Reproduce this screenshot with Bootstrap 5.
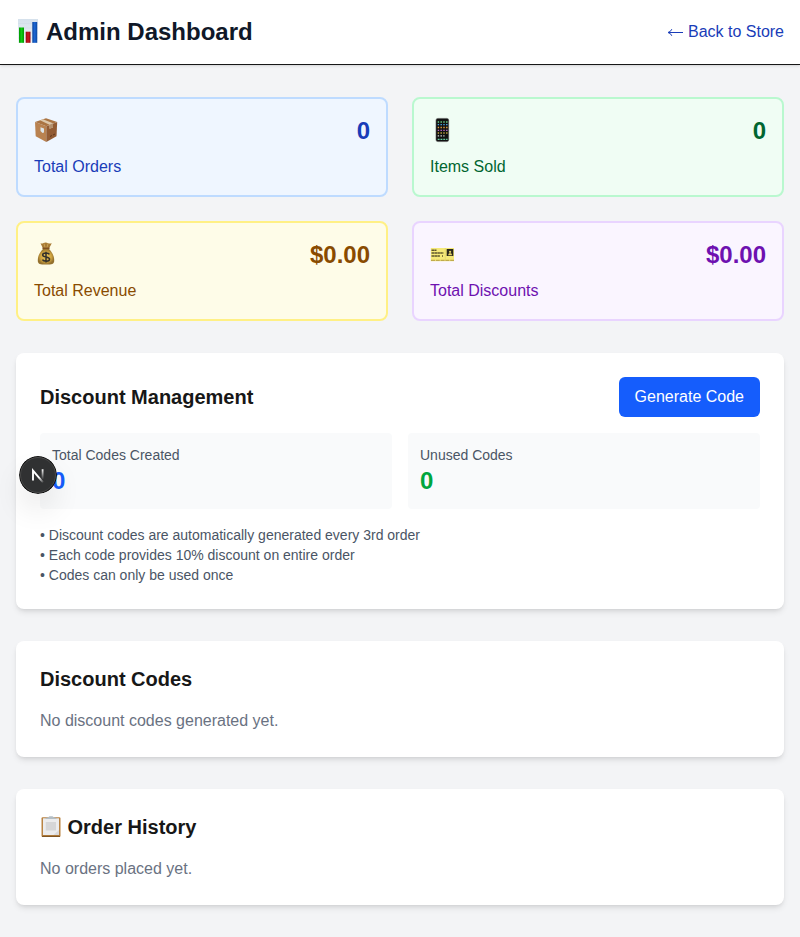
<!DOCTYPE html>
<html lang="en">
<head>
<meta charset="utf-8">
<meta name="viewport" content="width=device-width, initial-scale=1">
<title>Admin Dashboard</title>
<link href="https://cdn.jsdelivr.net/npm/bootstrap@5.3.0/dist/css/bootstrap.min.css" rel="stylesheet">
<style>
  body { background: #f3f4f6; color: #171717; font-family: "Liberation Sans", Arial, sans-serif; line-height: 24px; min-height: 937px; }
  .topbar { height: 65px; border-bottom: 1px solid #171717; box-shadow: 0 1px 3px rgba(0,0,0,.1), 0 1px 2px -1px rgba(0,0,0,.1); }
  .topbar h1 { font-size: 24px; line-height: 32px; color: #101828; }
  .topbar a { color: #193cb8; }
  .arrow { width: 17px; height: 16px; }
  .page { padding: 32px 16px; }
  .emoji { margin-bottom: 2px; }
  .title-emoji { margin-right: 5.500px; }
  .stat { border: 2px solid; border-radius: 8px; height: 100px; }
  .stat-value { font-size: 24px; line-height: 32px; }
  .stat-blue { background: #eff6ff; border-color: #bedbff; color: #193cb8; }
  .stat-green { background: #f0fdf4; border-color: #b9f8cf; color: #016630; }
  .stat-yellow { background: #fefce8; border-color: #fff085; color: #894b00; }
  .stat-purple { background: #faf5ff; border-color: #e9d4ff; color: #6e11b0; }
  .panel { border-radius: 8px; box-shadow: 0 4px 6px -1px rgba(0,0,0,.1), 0 2px 4px -2px rgba(0,0,0,.1); margin-top: 32px; }
  .panel h2 { font-size: 20px; line-height: 28px; }
  .btn-generate { background: #155dfc; color: #fff; border: 0; border-radius: 6px; padding: 8px 16px; line-height: 24px; height: 40px; }
  .tile { background: #f9fafb; border-radius: 4px; padding: 12px; height: 76px; }
  .tile-label, .notes { font-size: 14px; line-height: 20px; color: #4a5565; }
  .c-blue { color: #155dfc; }
  .c-green { color: #00a63e; }
  .empty { color: #6a7282; }
  .dev-badge { position: fixed; left: 19px; top: 456px; width: 38px; height: 38px; border-radius: 50%; box-shadow: 0 16px 32px -8px rgba(0,0,0,.24); z-index: 10; }
</style>
</head>
<body>
<header class="topbar bg-white d-flex justify-content-between align-items-center px-3">
  <h1 class="fw-bold mb-0 d-flex align-items-center">
    <svg class="emoji me-2" width="22" height="26" viewBox="0 0 22 26" aria-hidden="true">
      <defs>
        <linearGradient id="gBg" x2="0" y2="1"><stop stop-color="#d5e1ec"/><stop offset="1" stop-color="#eef2f6"/></linearGradient>
        <linearGradient id="gG"><stop stop-color="#009a00"/><stop offset=".5" stop-color="#10c914"/><stop offset="1" stop-color="#009a00"/></linearGradient>
        <linearGradient id="gR"><stop stop-color="#930710"/><stop offset=".5" stop-color="#cf1721"/><stop offset="1" stop-color="#930710"/></linearGradient>
        <linearGradient id="gB"><stop stop-color="#0b469f"/><stop offset=".5" stop-color="#1d67d4"/><stop offset="1" stop-color="#0b469f"/></linearGradient>
      </defs>
      <rect x="2" y="1" width="20" height="24" fill="url(#gBg)"/>
      <path d="M2 5.500H22M2 10H22M2 15H22M2 20H22" stroke="#ccd7e2" stroke-width=".4"/>
      <rect x="3" y="9.500" width="5" height="15.300" fill="url(#gG)"/>
      <rect x="9.700" y="13.700" width="4.800" height="11.100" fill="url(#gR)"/>
      <rect x="16.300" y="4" width="4.900" height="20.800" fill="url(#gB)"/>
    </svg>Admin Dashboard
  </h1>
  <a href="#" class="text-decoration-none d-flex align-items-center"><svg class="arrow me-1" viewBox="0 0 17 16" fill="none" stroke="currentColor" aria-hidden="true"><path d="M16 8.500H1.500M4.800 5.200 Q3.800 7.800 1 8.500 Q3.800 9.200 4.800 11.800" stroke-width="1"/></svg>Back to Store</a>
</header>

<main class="page">
  <div class="row row-cols-2 g-4">
    <div class="col"><div class="stat stat-blue p-3">
      <div class="d-flex justify-content-between align-items-center mb-2">
        <svg class="emoji" width="24" height="28" viewBox="0 0 24 28" aria-hidden="true">
          <path d="M1 6 12.300 10.200V26L1.700 20.300z" fill="#b98250"/>
          <path d="M12.300 10.200 23.200 6 22.500 20.300 12.300 26z" fill="#935c34"/>
          <path d="M1 6 12 2.200 23.200 6 12.300 10.200z" fill="#aa7443"/>
          <path d="M6 4.300 9 3.200 19 7.300V11.500l-3.500 1.300V8.700z" fill="#dcc7ab"/>
          <path d="M15.500 8.700 19 7.300V11.500l-3.500 1.300z" fill="#b3906e"/>
          <path d="M6.500 11.200 10 12.500V16.500L8.500 17 6.500 15z" fill="#dce4e8"/>
          <path d="M16 20.500 18 19.500M19 19 21 18" stroke="#5f371d"/>
        </svg>
        <div class="stat-value fw-bold">0</div>
      </div>
      <div>Total Orders</div>
    </div></div>
    <div class="col"><div class="stat stat-green p-3">
      <div class="d-flex justify-content-between align-items-center mb-2">
        <svg class="emoji" width="24" height="28" viewBox="0 0 24 28" aria-hidden="true">
          <rect x="6" y="2.400" width="12.700" height="23.200" rx="1.800" fill="#111" stroke="#555" stroke-width=".6"/>
          <g stroke-width="1.300" fill="none" stroke-dasharray="1.400 1.400">
            <path d="M7.700 6H17.500" stroke="#6bd38a"/>
            <path d="M7.700 8.700H17.500" stroke="#48a5e8"/>
            <path d="M7.700 11.500H17.500" stroke="#e6a13f"/>
            <path d="M7.700 14.300H17.500" stroke="#b965c7"/>
            <path d="M7.700 17H17.500" stroke="#c2a43e"/>
            <path d="M7.700 19.800H14.500" stroke="#d9dade"/>
            <path d="M7.700 23.300H17.500" stroke="#69cfa4" stroke-dasharray="1.900 .9"/>
          </g>
        </svg>
        <div class="stat-value fw-bold">0</div>
      </div>
      <div>Items Sold</div>
    </div></div>
    <div class="col"><div class="stat stat-yellow p-3">
      <div class="d-flex justify-content-between align-items-center mb-2">
        <svg class="emoji" width="24" height="28" viewBox="0 0 24 28" aria-hidden="true">
          <defs><radialGradient id="gBag"><stop stop-color="#e8c75e"/><stop offset=".65" stop-color="#d0a43f"/><stop offset="1" stop-color="#94712e"/></radialGradient></defs>
          <path d="M9 9C6 12 3.600 16 3.800 21c.2 3 2 3.500 8.200 3.500s8-.5 8.200-3.500C20.400 16 18 12 15 9z" fill="url(#gBag)"/>
          <path d="M6.500 3.200Q8 4 9.500 3 12 2 14 3.200q2 .8 3.800 0L15 8.500H9z" fill="#a87b34"/>
          <path d="M9 8.300H15" stroke="#80501f" stroke-width="1.400" stroke-linecap="round"/>
          <path d="M10 3.500 11 7.500M14 3.500 13 7.500" stroke="#d3ad60" stroke-width=".7"/>
          <path d="M15.400 14.300C14.500 12.500 8.700 12.300 8.700 14.900c0 2.600 6.900 1.400 6.900 4.100 0 2.900-6 2.700-7.200.7M12 11.800V22.500" fill="none" stroke="#33302a" stroke-width="1.500"/>
        </svg>
        <div class="stat-value fw-bold">$0.00</div>
      </div>
      <div>Total Revenue</div>
    </div></div>
    <div class="col"><div class="stat stat-purple p-3">
      <div class="d-flex justify-content-between align-items-center mb-2">
        <svg width="24" height="28" viewBox="0 0 24 28" aria-hidden="true">
          <rect x=".8" y="7" width="23.200" height="13.200" fill="#f4e878"/>
          <path d="M1 19.300H24" stroke="#b39c42" stroke-width="1" stroke-dasharray="4 .8"/>
          <path d="M1.500 9.200H6.500M1.500 12H13.500M1.500 15H10M12 15H13" stroke="#5d552c" stroke-width="1.500" stroke-dasharray="2.600 .3"/>
          <path d="M15.300 7.500V20" stroke="#cdbd60" stroke-width=".6" stroke-dasharray="1 1"/>
          <rect x="16.700" y="8" width="6.600" height="7" fill="#28261c"/>
          <path d="M18 14.300 19 12.300h2.200l1.100 2z" fill="#e4d369"/><circle cx="20.100" cy="10.800" r="1.100" fill="#e4d369"/>
        </svg>
        <div class="stat-value fw-bold">$0.00</div>
      </div>
      <div>Total Discounts</div>
    </div></div>
  </div>

  <section class="panel bg-white p-4">
    <div class="d-flex justify-content-between align-items-center mb-3">
      <h2 class="fw-bold mb-0">Discount Management</h2>
      <button type="button" class="btn btn-generate">Generate Code</button>
    </div>
    <div class="row row-cols-2 gx-3 mb-3">
      <div class="col"><div class="tile"><div class="tile-label">Total Codes Created</div><div class="stat-value fw-bold c-blue">0</div></div></div>
      <div class="col"><div class="tile"><div class="tile-label">Unused Codes</div><div class="stat-value fw-bold c-green">0</div></div></div>
    </div>
    <div class="notes">
      <div>• Discount codes are automatically generated every 3rd order</div>
      <div>• Each code provides 10% discount on entire order</div>
      <div>• Codes can only be used once</div>
    </div>
  </section>

  <section class="panel bg-white p-4">
    <h2 class="fw-bold mb-3">Discount Codes</h2>
    <div class="empty">No discount codes generated yet.</div>
  </section>

  <section class="panel bg-white p-4">
    <h2 class="fw-bold mb-3 d-flex align-items-center">
      <svg class="emoji title-emoji" width="22" height="24" viewBox="0 0 22 24" aria-hidden="true">
        <rect x="1.500" y="3.200" width="19" height="19.800" rx="1.200" fill="#b98343"/>
        <path d="M2 22.400H20" stroke="#815522" stroke-width="1.200"/>
        <path d="M3 4.300H19V21H3z" fill="#ececed"/>
        <rect x="5.800" y="8" width="10.200" height="8.500" fill="#d6d6d7"/>
        <path d="M5.500 5V3.900Q9 3.700 9.500 2.300h3Q13 3.700 16.500 3.900V5z" fill="#b4bec5"/>
        <path d="M13.500 21 19 16v5z" fill="#dadadc"/>
      </svg><span>Order History</span>
    </h2>
    <div class="empty">No orders placed yet.</div>
  </section>
</main>

<svg class="dev-badge" viewBox="0 0 38 38" aria-label="Developer tools">
  <defs><linearGradient id="gN1" gradientUnits="userSpaceOnUse" x1="19" y1="19" x2="24.500" y2="26"><stop offset=".3" stop-color="#fff"/><stop offset="1" stop-color="#fff" stop-opacity=".1"/></linearGradient>
  <linearGradient id="gN2" gradientUnits="userSpaceOnUse" x1="0" y1="13" x2="0" y2="23.500"><stop stop-color="#fff"/><stop offset="1" stop-color="#fff" stop-opacity="0"/></linearGradient></defs>
  <circle cx="19" cy="19" r="19" fill="#111"/>
  <circle cx="19" cy="19" r="17.500" fill="#303132" stroke="#555" stroke-width=".8"/>
  <path d="M14 24.600V14.600L24 26.300" fill="none" stroke="url(#gN1)" stroke-width="1.900"/>
  <path d="M23.600 13.200V23.500" stroke="url(#gN2)" stroke-width="1.800"/>
</svg>
<script src="https://cdn.jsdelivr.net/npm/bootstrap@5.3.0/dist/js/bootstrap.bundle.min.js"></script>
</body>
</html>
